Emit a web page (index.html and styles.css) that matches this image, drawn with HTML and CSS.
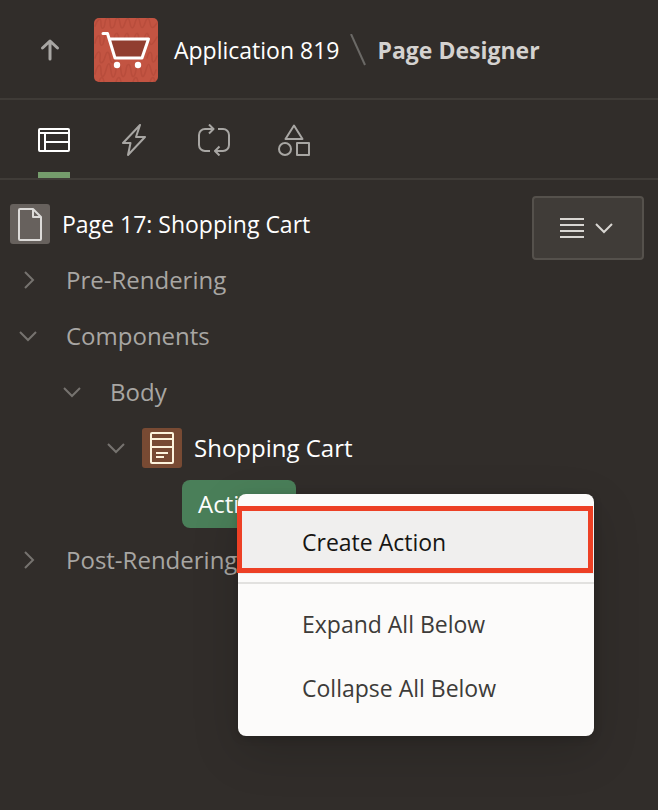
FILE: index.html
```html
<!DOCTYPE html>
<html lang="en">
<head>
<meta charset="utf-8">
<meta name="viewport" content="width=device-width, initial-scale=1">
<title>Page Designer</title>
<link rel="stylesheet" href="styles.css">
</head>
<body>
<header class="header">
  <button class="up" type="button" aria-label="Up">
    <svg width="20" height="24" viewBox="0 0 20 24" fill="none" stroke="currentColor" stroke-width="3"><path d="M10 21V4M2.500 10 10 3l7.500 7" stroke-linecap="round" stroke-linejoin="round"/></svg>
  </button>
  <svg class="app-icon" width="64" height="64" viewBox="0 0 64 64" fill="none" aria-hidden="true">
    <rect width="64" height="64" rx="5" fill="#c35442"/>
    <g stroke="#b84d3c" stroke-width="1.500" stroke-linecap="round">
      <path d="M1 8C3 2 7-2 7 5s3 7 4 0 5-7 5 0 4 6 5 0 4-7 5 0 3 6 5 0 4-6 5 0 3 7 5 0 4-6 5 0 3 6 5 0 4-6 5 0 3 6 7 0"/>
      <path d="M1 25c2-8 5-10 5-3s3 7 4 0 4-8 5 0 4 6 5-1 4-8 5 0 3 7 5 0 4-8 5 0 3 7 5 0 4-8 5 0 3 7 5 0 4-8 5 0 3 7 8-2"/>
      <path d="M1 40c3-9 6-7 5 0s3 6 5-1 4-6 5 1 4 5 5 0M53 40c2-8 5-7 5 0s3 4 5-2"/>
      <path d="M1 56c3-11 6-11 6-3s3 7 5-1 4-9 5 1 4 6 5-1 4-8 5 1 4 6 5-1 4-8 5 1 4 6 5-1 4-8 5 1 3 6 5-1 3-8 5 0 3 6 5 0"/>
      <path d="M5 64c2-6 4-6 5 0M22 64c2-6 4-6 5 0M39 64c2-6 4-6 5 0M56 64c2-6 4-6 5 0"/>
    </g>
    <path d="M17 22h36l-5 18H21z" fill="#913e30"/>
    <path d="M9 15.500h4.500L21 40h27l6.500-19H15.500" stroke="#fff" stroke-width="3" stroke-linecap="round" stroke-linejoin="round"/>
    <circle cx="23" cy="47" r="3.200" fill="#fff"/><circle cx="44" cy="47" r="3.200" fill="#fff"/>
  </svg>
  <nav class="crumbs" aria-label="Breadcrumb">
    <a href="#app">Application 819</a>
    <svg width="16" height="32" viewBox="0 0 16 32" fill="none" stroke="#6b6966" stroke-width="2" aria-hidden="true"><path d="M1 0 15 31"/></svg>
    <h1>Page Designer</h1>
  </nav>
</header>

<div class="tabs" role="tablist">
  <button class="tab tab-active" type="button" role="tab" aria-selected="true" aria-label="Rendering">
    <svg width="32" height="32" viewBox="0 0 32 32" fill="none" stroke="currentColor" stroke-width="2"><rect x="1" y="5" width="30" height="22" rx="1"/><path d="M1 9h30M7 9v18M7 18h24"/></svg>
  </button>
  <button class="tab" type="button" role="tab" aria-selected="false" aria-label="Dynamic Actions">
    <svg width="32" height="32" viewBox="0 0 32 32" fill="none" stroke="currentColor" stroke-width="2" stroke-linejoin="round"><path d="M22 1 5 19h7.500L10 31l17-18h-9z"/></svg>
  </button>
  <button class="tab" type="button" role="tab" aria-selected="false" aria-label="Processing">
    <svg width="32" height="32" viewBox="0 0 32 32" fill="none" stroke="currentColor" stroke-width="2" stroke-linejoin="round"><path d="M12 27H7a6 6 0 0 1-6-6V11a6 6 0 0 1 6-6h8M20 5h5a6 6 0 0 1 6 6v10a6 6 0 0 1-6 6h-8M11 .500 15.500 5 11 9.500M21.500 22.500 17 27l4.500 4.500"/></svg>
  </button>
  <button class="tab" type="button" role="tab" aria-selected="false" aria-label="Shared Components">
    <svg width="32" height="32" viewBox="0 0 32 32" fill="none" stroke="currentColor" stroke-width="2" stroke-linejoin="round"><path d="M16 1.500 24.500 15h-17z"/><circle cx="7" cy="25" r="6"/><path d="M19 19h12v12H19z"/></svg>
  </button>
</div>

<main class="panel">
  <ul class="tree">
    <li>
      <div class="row row-page bright">
        <svg width="40" height="40" viewBox="0 0 40 40" fill="none" stroke="#dddbd9" stroke-width="2" stroke-linejoin="round" aria-hidden="true"><rect width="40" height="40" rx="3" fill="#67615d" stroke="none"/><path d="M10 5h13l8 8v22a1 1 0 0 1-1 1H10a1 1 0 0 1-1-1V6a1 1 0 0 1 1-1zM23 5v8h8"/></svg>
        <span>Page 17: Shopping Cart</span>
      </div>
    </li>
    <li>
      <div class="row">
        <button class="toggle" type="button" aria-label="Expand Pre-Rendering"><svg width="20" height="20" viewBox="0 0 20 20"><path d="m7 2 8 8-8 8"/></svg></button>
        <span>Pre-Rendering</span>
      </div>
    </li>
    <li>
      <div class="row">
        <button class="toggle" type="button" aria-label="Collapse Components"><svg width="20" height="20" viewBox="0 0 20 20"><path d="m2 6 8 8 8-8"/></svg></button>
        <span>Components</span>
      </div>
      <ul class="branch">
        <li>
          <div class="row">
            <button class="toggle" type="button" aria-label="Collapse Body"><svg width="20" height="20" viewBox="0 0 20 20"><path d="m2 6 8 8 8-8"/></svg></button>
            <span>Body</span>
          </div>
          <ul class="branch">
            <li>
              <div class="row row-region bright">
                <button class="toggle" type="button" aria-label="Collapse Shopping Cart"><svg width="20" height="20" viewBox="0 0 20 20"><path d="m2 6 8 8 8-8"/></svg></button>
                <svg width="40" height="40" viewBox="0 0 40 40" fill="none" stroke="#fdf3dc" stroke-width="2" aria-hidden="true"><rect width="40" height="40" rx="3" fill="#784a33" stroke="none"/><rect x="9" y="5" width="22" height="30" rx="1"/><path d="M9 11h22M9 19h22M14 25h12M14 29h8"/></svg>
                <span>Shopping Cart</span>
              </div>
              <div class="row row-actions">
                <button class="selected" type="button">Actions</button>
                <div class="menu" role="menu">
                  <button class="item item-current" type="button" role="menuitem">Create Action</button>
                  <hr>
                  <button class="item" type="button" role="menuitem">Expand All Below</button>
                  <button class="item" type="button" role="menuitem">Collapse All Below</button>
                </div>
              </div>
            </li>
          </ul>
        </li>
      </ul>
    </li>
    <li>
      <div class="row">
        <button class="toggle" type="button" aria-label="Expand Post-Rendering"><svg width="20" height="20" viewBox="0 0 20 20"><path d="m7 2 8 8-8 8"/></svg></button>
        <span>Post-Rendering</span>
      </div>
    </li>
  </ul>
  <button class="options" type="button" aria-label="Tree options">
    <svg width="24" height="24" viewBox="0 0 24 24" fill="none" stroke="currentColor" stroke-width="2"><path d="M0 3h24M0 9h24M0 15h24M0 21h24"/></svg>
    <svg width="20" height="20" viewBox="0 0 20 20" fill="none" stroke="currentColor" stroke-width="2"><path d="m2 6 8 8 8-8"/></svg>
  </button>
</main>
</body>
</html>
```

FILE: styles.css
```css
* {
  box-sizing: border-box;
}

body {
  margin: 0;
  min-height: 100vh;
  background: #312d2a;
  color: #a8a6a3;
  font-family: "Open Sans", "Noto Sans", sans-serif;
  font-size: 23px;
  font-weight: 500;
  line-height: 32px;
}

button {
  margin: 0;
  padding: 0;
  border: 0;
  background: none;
  color: inherit;
  font: inherit;
  cursor: pointer;
}

svg {
  display: block;
  flex: none;
}

.header {
  display: flex;
  align-items: center;
  height: 100px;
  padding: 2px 40px 0;
  border-bottom: 2px solid #3f3b37;
}

.up {
  margin-right: 34px;
}

.app-icon {
  margin-right: 16px;
}

.crumbs {
  display: flex;
  align-items: center;
  gap: 11px;
  white-space: nowrap;
}

.crumbs a {
  color: #fff;
  text-decoration: none;
}

.crumbs h1 {
  margin: 0;
  color: #d4d2d0;
  font-size: 23px;
  font-weight: 700;
}

.tabs {
  display: flex;
  gap: 48px;
  height: 80px;
  padding: 0 38px;
  border-bottom: 2px solid #403c38;
}

.tab {
  padding-top: 24px;
  padding-bottom: 16px;
  border-bottom: 6px solid transparent;
}

.tab-active {
  border-color: #759c6c;
  color: #fff;
}

.panel {
  display: flex;
  align-items: flex-start;
  justify-content: space-between;
  padding: 16px 14px 16px 10px;
}

.tree,
.branch {
  margin: 0;
  padding: 0;
  list-style: none;
}

.branch {
  padding-left: 44px;
}

.row {
  display: flex;
  align-items: center;
  gap: 28px;
  height: 56px;
  padding-left: 8px;
  font-size: 24px;
  white-space: nowrap;
}

.row-page {
  gap: 12px;
  padding-left: 0;
  font-size: 23px;
}

.row-region {
  gap: 12px;
}

.row-region .toggle {
  margin-right: 4px;
}

.bright {
  color: #fff;
}

.toggle svg {
  fill: none;
  stroke: #76736f;
  stroke-width: 2;
}

.row-actions {
  position: relative;
  padding-left: 84px;
}

.selected {
  height: 48px;
  padding: 0 16px;
  border-radius: 8px;
  background: #4a7f59;
  color: #fff;
}

.menu {
  position: absolute;
  z-index: 1;
  top: 18px;
  left: 140px;
  width: 356px;
  padding: 16px 0;
  border-radius: 8px;
  background: #fcfbfa;
  box-shadow: 0 16px 48px rgba(0, 0, 0, 0.16), 0 2px 8px rgba(0, 0, 0, 0.16);
  color: #3d3b39;
  font-size: 23px;
}

.item {
  display: block;
  width: 100%;
  height: 64px;
  padding: 0 64px;
  text-align: left;
}

.item-current {
  position: relative;
  background: #f0efee;
  color: #161513;
}

.item-current::after {
  position: absolute;
  inset: -4px 1px 1px -1px;
  border: 5px solid #ed4025;
  content: "";
}

.menu hr {
  height: 2px;
  margin: 8px 0;
  border: 0;
  background: #e2e1df;
}

.options {
  display: flex;
  align-items: center;
  justify-content: center;
  gap: 10px;
  width: 112px;
  height: 64px;
  padding-right: 2px;
  border: 2px solid #55514c;
  border-radius: 4px;
  background: #403c38;
  color: #d8d6d2;
}
```
